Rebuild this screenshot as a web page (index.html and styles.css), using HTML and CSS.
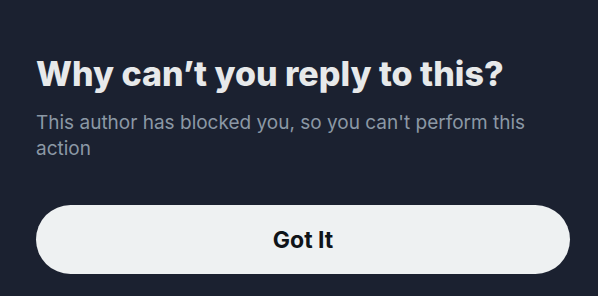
FILE: index.html
```html
<!DOCTYPE html>
<html>
<head>
<meta charset="utf-8">
<link rel="stylesheet" href="styles.css">
</head>
<body>
<div class="sheet">
  <h1 class="title">Why can’t you reply to this?</h1>
  <p class="desc">This author has blocked you, so you can't perform this action</p>
  <button class="btn">Got It</button>
</div>
</body>
</html>
```

FILE: styles.css
```css
html, body {
  margin: 0;
  padding: 0;
  background: #1b2130;
  width: 598px;
  height: 296px;
  overflow: hidden;
}
.sheet {
  padding: 52px 30px 0 36px;
  display: flex;
  flex-direction: column;
  font-family: Inter, "Noto Sans", sans-serif;
}
.title {
  margin: 0;
  font-size: 34px;
  line-height: 44px;
  font-weight: 800;
  letter-spacing: 0;
  color: #e7e9ea;
}
.desc {
  margin: 14px 0 0;
  width: 520px;
  font-size: 19px;
  line-height: 26px;
  font-weight: 400;
  color: #8b98a5;
}
.btn {
  margin-top: 43px;
  width: 534px;
  height: 69px;
  border: none;
  border-radius: 35px;
  background: #eef1f2;
  color: #0f1419;
  font-family: Inter, "Noto Sans", sans-serif;
  font-size: 23px;
  font-weight: 700;
  padding: 0;
}
```
